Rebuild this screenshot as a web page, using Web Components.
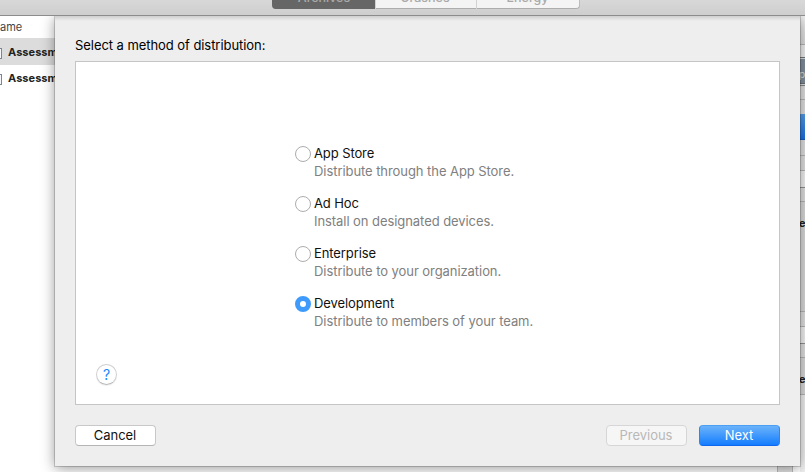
<!DOCTYPE html>
<html lang="en"><head><meta charset="utf-8"><title>Organizer</title>
<style>
html,body{margin:0;width:805px;height:472px;overflow:hidden;background:#fff}
body{font:13px/18px Inter,"Liberation Sans",sans-serif;color:#111}
</style></head><body>
<organizer-window></organizer-window>
<script>
const define=(name,html)=>customElements.define(name,class extends HTMLElement{
  connectedCallback(){
    if(this.shadowRoot)return;
    this.attachShadow({mode:'open'}).innerHTML=html;
  }
});

define('segment-bar',`<style>
:host{display:flex;justify-content:center;box-sizing:border-box;height:16px;padding-left:46px;background:linear-gradient(#d8d8d8,#cecece);border-bottom:1px solid #8c8c8c;overflow:hidden}
.bar{display:grid;grid-template-columns:103px 101px 104px;width:308px;height:22px;margin-top:-13px;border-radius:4px;overflow:hidden;background:#f4f4f4;box-shadow:inset 0 -1px #adadad,inset -1px 0 #bdbdbd}
span{text-align:center;font-size:12.5px;line-height:22px;font-weight:500;color:#a9a9a9;border-left:1px solid #d2d2d2;padding-right:1px}
span:first-child{background:#666;color:#aaa;border:0;height:22px;padding:0 0 0 2px}
</style><div class="bar"><span>Archives</span><span>Crashes</span><span>Energy</span></div>`);

define('archive-row',`<style>
:host{display:flex;align-items:center;height:26px;font-size:11px;font-weight:650;color:#222;white-space:nowrap;letter-spacing:.05px}
:host([selected]){background:#dcdcdc;height:27px}
i{box-sizing:border-box;width:10px;height:11px;margin:3px 6px 0 -8px;border:1px solid #7d858e;background:#f5f7fa;flex:none}
</style><i></i><slot></slot>`);

define('archive-list',`<style>
:host{display:block;width:200px;background:#fff;overflow:hidden}
header{height:22px;line-height:22px;font-size:11px;color:#444;letter-spacing:0}
</style><header>ame</header><archive-row selected>Assessment</archive-row><archive-row>Assessment</archive-row>`);

define('inspector-edge',`<style>
:host{display:flex;flex-direction:column;width:5px;overflow:hidden;background:#dcdcdc}
div{box-sizing:border-box;flex:none;border-bottom:1px solid #b7b7b7;background:#e2e2e2;overflow:hidden}
.badge{background:#82909d;color:#dce2e8;font-size:10px;line-height:30px;text-indent:-1px;border-color:#68727b}
.label{font-size:11px;font-weight:700;color:#222;text-indent:-1px;background:#dcdcdc}
</style>
<div style="height:29px;background:linear-gradient(#f1f1f1,#dedede)"></div>
<div style="height:13px;background:#f1f1f1;border-color:#777"></div>
<div class="badge" style="height:26px;border-top:1px solid #ddd">p</div>
<div style="height:2px;border-color:#888"></div>
<div style="height:14px"></div>
<div style="height:14px;border:0"></div>
<div style="height:26px;background:linear-gradient(#559de8,#1b72e4);border-color:#185dbd"></div>
<div style="height:16px"></div>
<div style="height:15px"></div>
<div style="height:17px;background:#f4f4f4;border-color:#929292"></div>
<div style="height:14px"></div>
<div class="label" style="height:110px;line-height:43px">e</div>
<div style="height:15px"></div>
<div style="height:17px;background:#f4f4f4;border-color:#929292"></div>
<div style="height:14px"></div>
<div class="label" style="height:37px;line-height:43px">e</div>
<div style="flex:1;border:0;background:#f3f3f3"></div>`);

define('method-option',`<style>
:host{display:grid;grid-template-columns:16px auto;grid-template-rows:18px 18px;column-gap:3px;height:36px;white-space:nowrap;letter-spacing:-.1px}
.r{box-sizing:border-box;width:16px;height:16px;margin-top:2px;border:1px solid #adadad;border-radius:50%;background:#fff}
:host([checked]) .r{border:5.5px solid #3f9bfb}
b{font-weight:400}
small{font-size:13px;grid-column:2;color:#808080;letter-spacing:-.065px}
</style><span class="r"></span><b><slot></slot></b><small><slot name="detail"></slot></small>`);

define('push-button',`<style>
:host{display:block;box-sizing:border-box;width:81px;height:21px;border:1px solid #c8c8c8;border-bottom-color:#b5b5b5;border-radius:4px;background:#fff;text-align:center;line-height:19px}
:host([disabled]){background:#f6f6f6;border-color:#d6d6d6;color:#b8b8b8}
:host([primary]){background:linear-gradient(#6bb3fa,#147dfe);border-color:#4ca0f4 #2b86f5 #0d68ed;color:#fff}
span{padding-right:1px;letter-spacing:-.04px}
</style><span><slot></slot></span>`);

define('distribution-sheet',`<style>
:host{display:flex;flex-direction:column;box-sizing:border-box;width:745px;height:450px;padding:20px 20px 0;background:#eee;box-shadow:0 0 0 1px rgba(0,0,0,.17),0 2px 13px rgba(0,0,0,.42)}
h1{font:inherit;margin:0 0 7px;height:18px;color:#000;letter-spacing:-.06px}
.panel{box-sizing:border-box;height:344px;width:705px;border:1px solid #c5c5c5;background:#fff;display:grid;grid-template-columns:219px auto;grid-template-rows:302px auto}
.options{display:flex;flex-direction:column;gap:14px;padding-top:82px;grid-column:2}
.help{box-sizing:border-box;grid-column:1;grid-row:2;width:21px;height:21px;margin:0 0 0 20px;border:1px solid #cfcfcf;border-bottom-color:#b8b8b8;border-radius:50%;color:#1688fc;text-align:center;font-size:14px;line-height:20px;box-shadow:0 1px 1px #0001}
footer{display:flex;margin-top:20px;gap:12px}
footer :first-child{margin-right:auto}
</style>
<h1>Select a method of distribution:</h1>
<div class="panel"><div class="options">
<method-option>App Store<span slot="detail">Distribute through the App Store.</span></method-option>
<method-option>Ad Hoc<span slot="detail">Install on designated devices.</span></method-option>
<method-option>Enterprise<span slot="detail">Distribute to your organization.</span></method-option>
<method-option checked>Development<span slot="detail">Distribute to members of your team.</span></method-option>
</div><div class="help">?</div></div>
<footer><push-button>Cancel</push-button><push-button disabled>Previous</push-button><push-button primary>Next</push-button></footer>`);

define('organizer-window',`<style>
:host{display:grid;grid-template-rows:16px 456px;width:805px;height:472px;position:relative;overflow:hidden}
main{display:flex;position:relative;overflow:hidden}
.mid{flex:1;background:#fff;display:flex;justify-content:flex-end}
.scroll{box-sizing:border-box;width:16px;margin-right:7px;background:#e2e2e2;border:solid #bbb;border-width:0 1px}
distribution-sheet{position:absolute;left:55px;top:0}
.shade{position:absolute;left:55px;top:0;width:745px;height:5px;background:linear-gradient(#cfcfcf,#eee)}
</style><segment-bar></segment-bar><main><archive-list></archive-list><div class="mid"><div class="scroll"></div></div><inspector-edge></inspector-edge><distribution-sheet></distribution-sheet><div class="shade"></div></main>`);
</script></body></html>
